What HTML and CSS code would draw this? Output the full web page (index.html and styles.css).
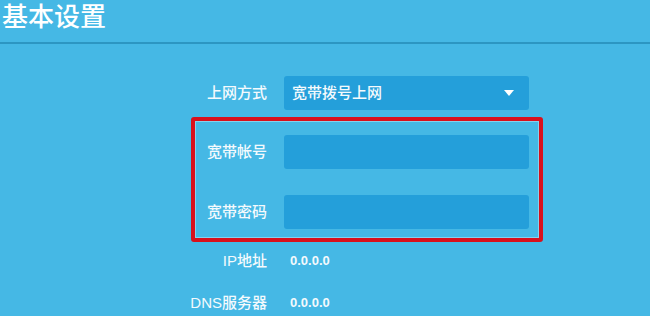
FILE: index.html
```html
<!DOCTYPE html>
<html lang="zh-CN">
<head>
<meta charset="utf-8">
<title>基本设置</title>
<link rel="stylesheet" href="styles.css">
</head>
<body>
<div class="page">
  <div class="header">
    <h1 class="title">基本设置</h1>
  </div>
  <div class="form">
    <div class="row row-select">
      <label class="label">上网方式</label>
      <div class="select">
        <span class="select-text">宽带拨号上网</span>
        <svg class="arrow" width="10" height="6" viewBox="0 0 10 6"><polygon points="0,0 10,0 5,6" fill="#ffffff"/></svg>
      </div>
    </div>
    <div class="highlight">
      <div class="row row-input">
        <label class="label">宽带帐号</label>
        <div class="input"></div>
      </div>
      <div class="row row-input second">
        <label class="label">宽带密码</label>
        <div class="input"></div>
      </div>
    </div>
    <div class="row row-info">
      <span class="label">IP地址</span>
      <span class="value">0.0.0.0</span>
    </div>
    <div class="row row-info dns">
      <span class="label">DNS服务器</span>
      <span class="value">0.0.0.0</span>
    </div>
  </div>
</div>
</body>
</html>
```

FILE: styles.css
```css
html, body {
  margin: 0;
  padding: 0;
}
body {
  width: 650px;
  height: 316px;
  overflow: hidden;
  background: #45b8e5;
  font-family: "Liberation Sans", "Noto Sans CJK SC", sans-serif;
  color: #f4fafd;
}
.page {
  width: 650px;
}
.header {
  height: 42px;
  border-bottom: 2px solid #2c96c2;
}
.title {
  margin: 0;
  padding: 4px 0 0 2px;
  font-size: 26px;
  line-height: 26px;
  font-weight: 500;
  color: #ffffff;
}
.form {
  padding-top: 32px;
  padding-left: 187px;
}
.row {
  display: grid;
  grid-template-columns: 80px 245px;
  column-gap: 17px;
  align-items: center;
}
.label {
  text-align: right;
  font-size: 15px;
  line-height: 20px;
  font-weight: 500;
}
.select {
  height: 34px;
  background: #249fda;
  border-radius: 3px;
  display: flex;
  align-items: center;
  justify-content: space-between;
  padding: 0 15px 0 8px;
}
.select-text {
  font-size: 15px;
  line-height: 20px;
  font-weight: 500;
}
.arrow {
  display: block;
}
.highlight {
  margin-top: 7px;
  margin-left: 4px;
  width: 344px;
  border: 4px solid #d8101c;
  border-radius: 3px;
  padding: 14px 0 9px 0;
  box-shadow: inset 0 0 0 1px rgba(255,255,255,0.35);
}
.highlight .row {
  grid-template-columns: 72px 245px;
}
.input {
  height: 34px;
  background: #249fda;
  border-radius: 3px;
}
.row-input.second {
  margin-top: 26px;
}
.row-info {
  margin-top: 9px;
}
.row-info.dns {
  margin-top: 22px;
}
.value {
  font-size: 13px;
  line-height: 20px;
  padding-left: 6px;
  font-weight: bold;
}
```
